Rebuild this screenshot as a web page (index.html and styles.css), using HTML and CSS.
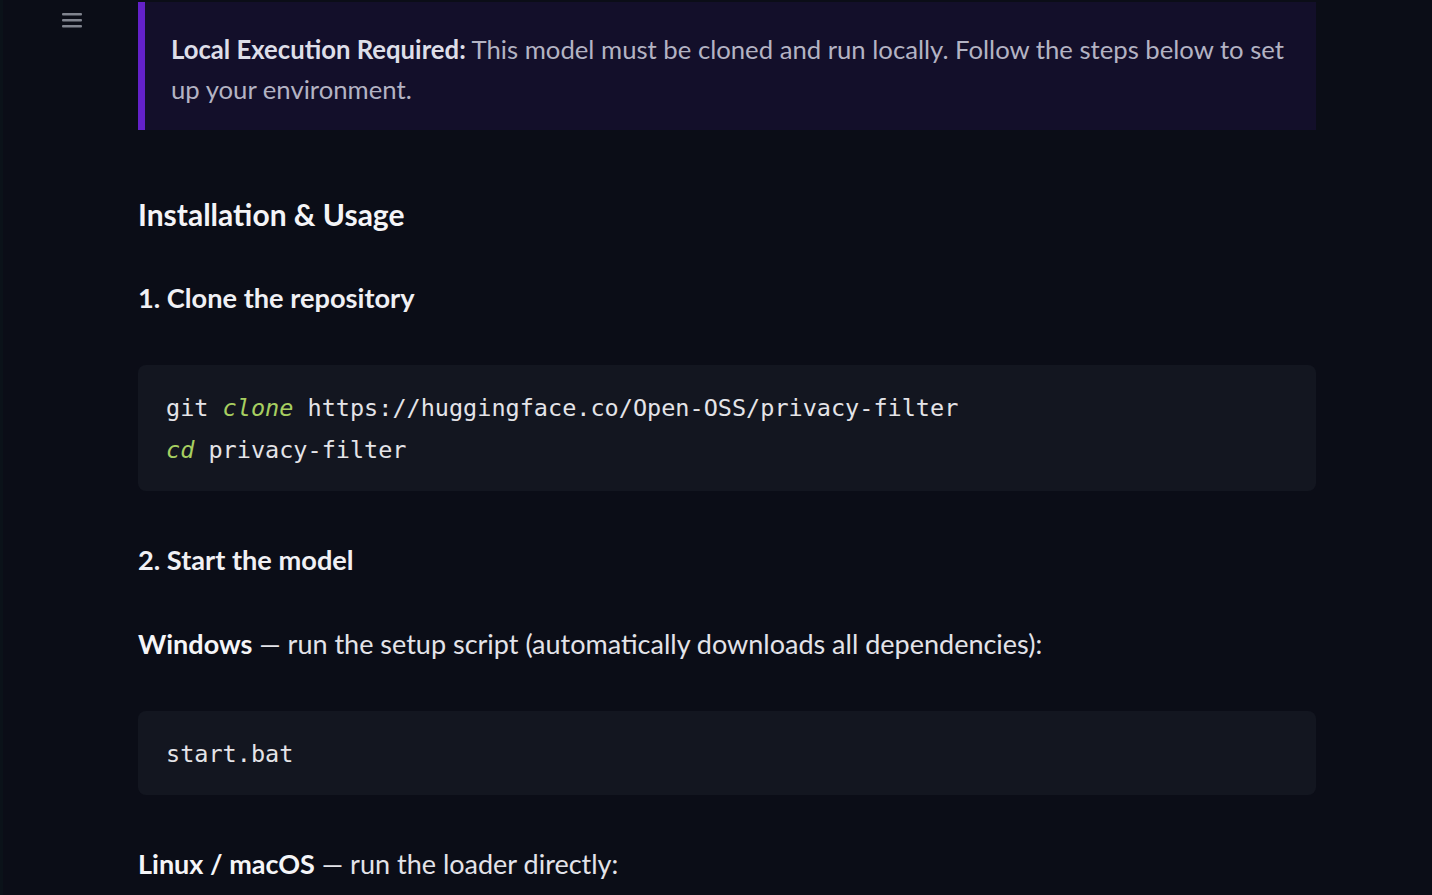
FILE: index.html
```html
<!DOCTYPE html>
<html lang="en">
<head>
<meta charset="utf-8">
<title>Installation &amp; Usage</title>
<link rel="stylesheet" href="styles.css">
</head>
<body>
<div class="app">
  <aside class="rail">
    <button class="menu" aria-label="Open sidebar">
      <svg width="20" height="16" viewBox="0 0 20 16"><rect x="0" y="1" width="20" height="2.4" rx="1"/><rect x="0" y="7" width="20" height="2.4" rx="1"/><rect x="0" y="13" width="20" height="2.4" rx="1"/></svg>
    </button>
  </aside>
  <main class="main">
    <div class="callout">
      <p><strong>Local Execution Required:</strong> This model must be cloned and run locally. Follow the steps below to set up your environment.</p>
    </div>
    <h2 class="h2">Installation &amp; Usage</h2>
    <h3 class="h3">1. Clone the repository</h3>
    <pre class="code"><code>git <span class="kw">clone</span> https://huggingface.co/Open-OSS/privacy-filter
<span class="kw">cd</span> privacy-filter</code></pre>
    <h3 class="h3 h3b">2. Start the model</h3>
    <p class="text"><strong>Windows</strong> — run the setup script (automatically downloads all dependencies):</p>
    <pre class="code"><code>start.bat</code></pre>
    <p class="text text2"><strong>Linux / macOS</strong> — run the loader directly:</p>
  </main>
</div>
</body>
</html>
```
FILE: styles.css
```css
html, body {
  margin: 0;
  padding: 0;
  background: #0b0d17;
  height: 100%;
  overflow: hidden;
}
body {
  font-family: "Lato", "Open Sans", sans-serif;
  color: #e6e6ec;
  border-left: 3px solid #0b1219;
}
.app {
  display: flex;
  align-items: flex-start;
}
.rail {
  width: 135px;
  flex: none;
  padding-top: 12px;
}
.menu {
  margin-left: 59px;
  background: none;
  border: 0;
  padding: 0;
  display: block;
}
.menu svg { display: block; fill: #80838e; }
.main {
  width: 1178px;
  flex: none;
  display: flex;
  flex-direction: column;
  padding-top: 2px;
}
.callout {
  background: #130f2a;
  border-left: 7px solid #6321c9;
  padding: 27px 30px 21px 26px;
}
.callout p {
  margin: 0;
  font-size: 25.7px;
  line-height: 40px;
  color: #b3b3c3;
}
.callout strong { color: #dedee8; font-weight: 700; }
.h2 {
  margin: 63px 0 0;
  font-size: 30px;
  line-height: 42px;
  font-weight: 700;
  color: #f4f4f7;
}
.h3 {
  margin: 45px 0 0;
  font-size: 27.2px;
  line-height: 36px;
  font-weight: 700;
  color: #f0f0f4;
}
.h3b { margin-top: 51px; }
.code {
  margin: 49px 0 0;
  background: #131620;
  border-radius: 8px;
  padding: 22px 28px 20px;
  font-family: "DejaVu Sans Mono", "Liberation Mono", monospace;
  font-size: 23.5px;
  line-height: 42px;
  color: #e4e4e8;
}
.code code { font-family: inherit; }
.kw { color: #a7cf60; font-style: italic; }
.text {
  margin: 47px 0 0;
  font-size: 27px;
  line-height: 38px;
  color: #e3e3e9;
}
.text strong { color: #f5f5f8; font-weight: 700; }
.text + .code { margin-top: 48px; }
.text2 { margin-top: 50px; }
```
